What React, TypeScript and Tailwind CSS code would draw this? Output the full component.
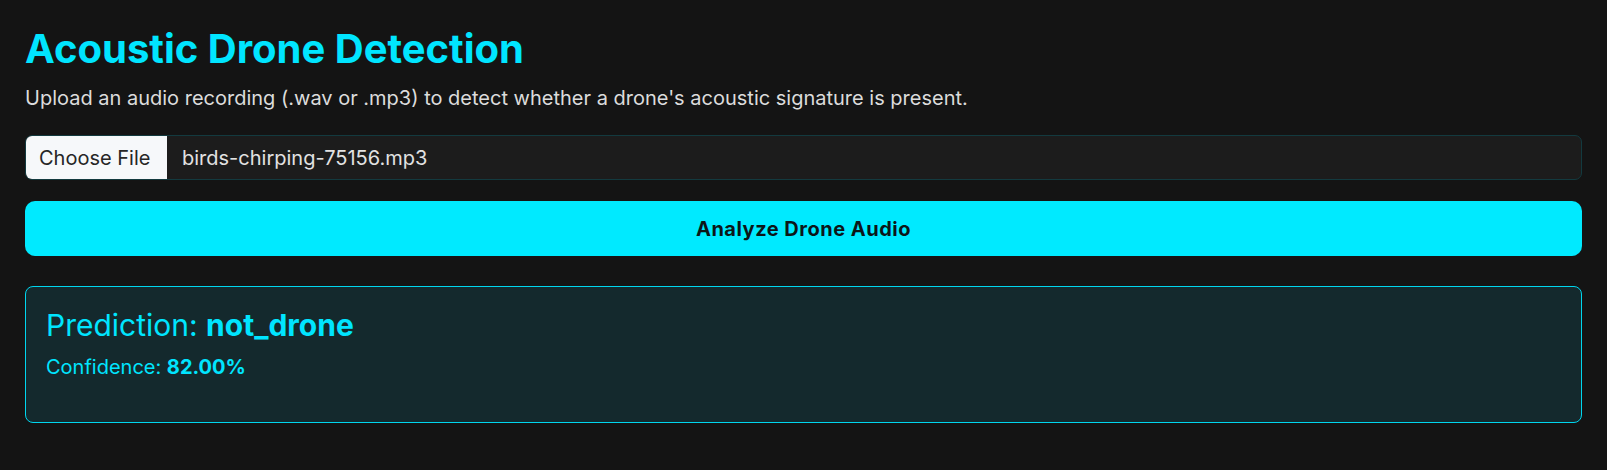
import React from "react";

export default function App() {
  return (
    <div
      className="min-h-[470px] w-full bg-[#141414] px-[25px] pt-[25px] pb-[40px]"
      style={{ fontFamily: "Inter, 'Noto Sans', sans-serif" }}
    >
      <h1 className="text-[40px] font-bold leading-[48px] text-[#00e5ff]">
        Acoustic Drone Detection
      </h1>
      <p className="mt-[10px] text-[20px] leading-[30px] text-[#dcdcdc]">
        Upload an audio recording (.wav or .mp3) to detect whether a drone's acoustic signature is present.
      </p>

      <div className="mt-[22px] flex h-[45px] overflow-hidden rounded-[7px] border border-[#133a3f] bg-[#1c1c1c]">
        <div className="flex w-[141px] items-center pl-[13px] bg-[#f6f8fa] text-[20px] text-[#262626]">
          Choose File
        </div>
        <div className="flex items-center pl-[15px] text-[20px] text-[#e2e2e2]">
          birds-chirping-75156.mp3
        </div>
      </div>

      <button className="mt-[21px] flex h-[55px] w-full items-center justify-center rounded-[10px] bg-[#00eaff] text-[20px] font-bold tracking-[0.5px] text-[#0c1618]">
        Analyze Drone Audio
      </button>

      <div className="mt-[30px] h-[137px] rounded-[8px] border border-[#00d6ee] bg-[#14292d] px-[20px] pt-[20px]">
        <h2 className="text-[30px] leading-[36px] text-[#00e5ff]">
          Prediction: <span className="font-bold">not_drone</span>
        </h2>
        <p className="mt-[9px] text-[20px] leading-[30px] text-[#00e5ff]">
          Confidence: <span className="font-bold">82.00%</span>
        </p>
      </div>
    </div>
  );
}
